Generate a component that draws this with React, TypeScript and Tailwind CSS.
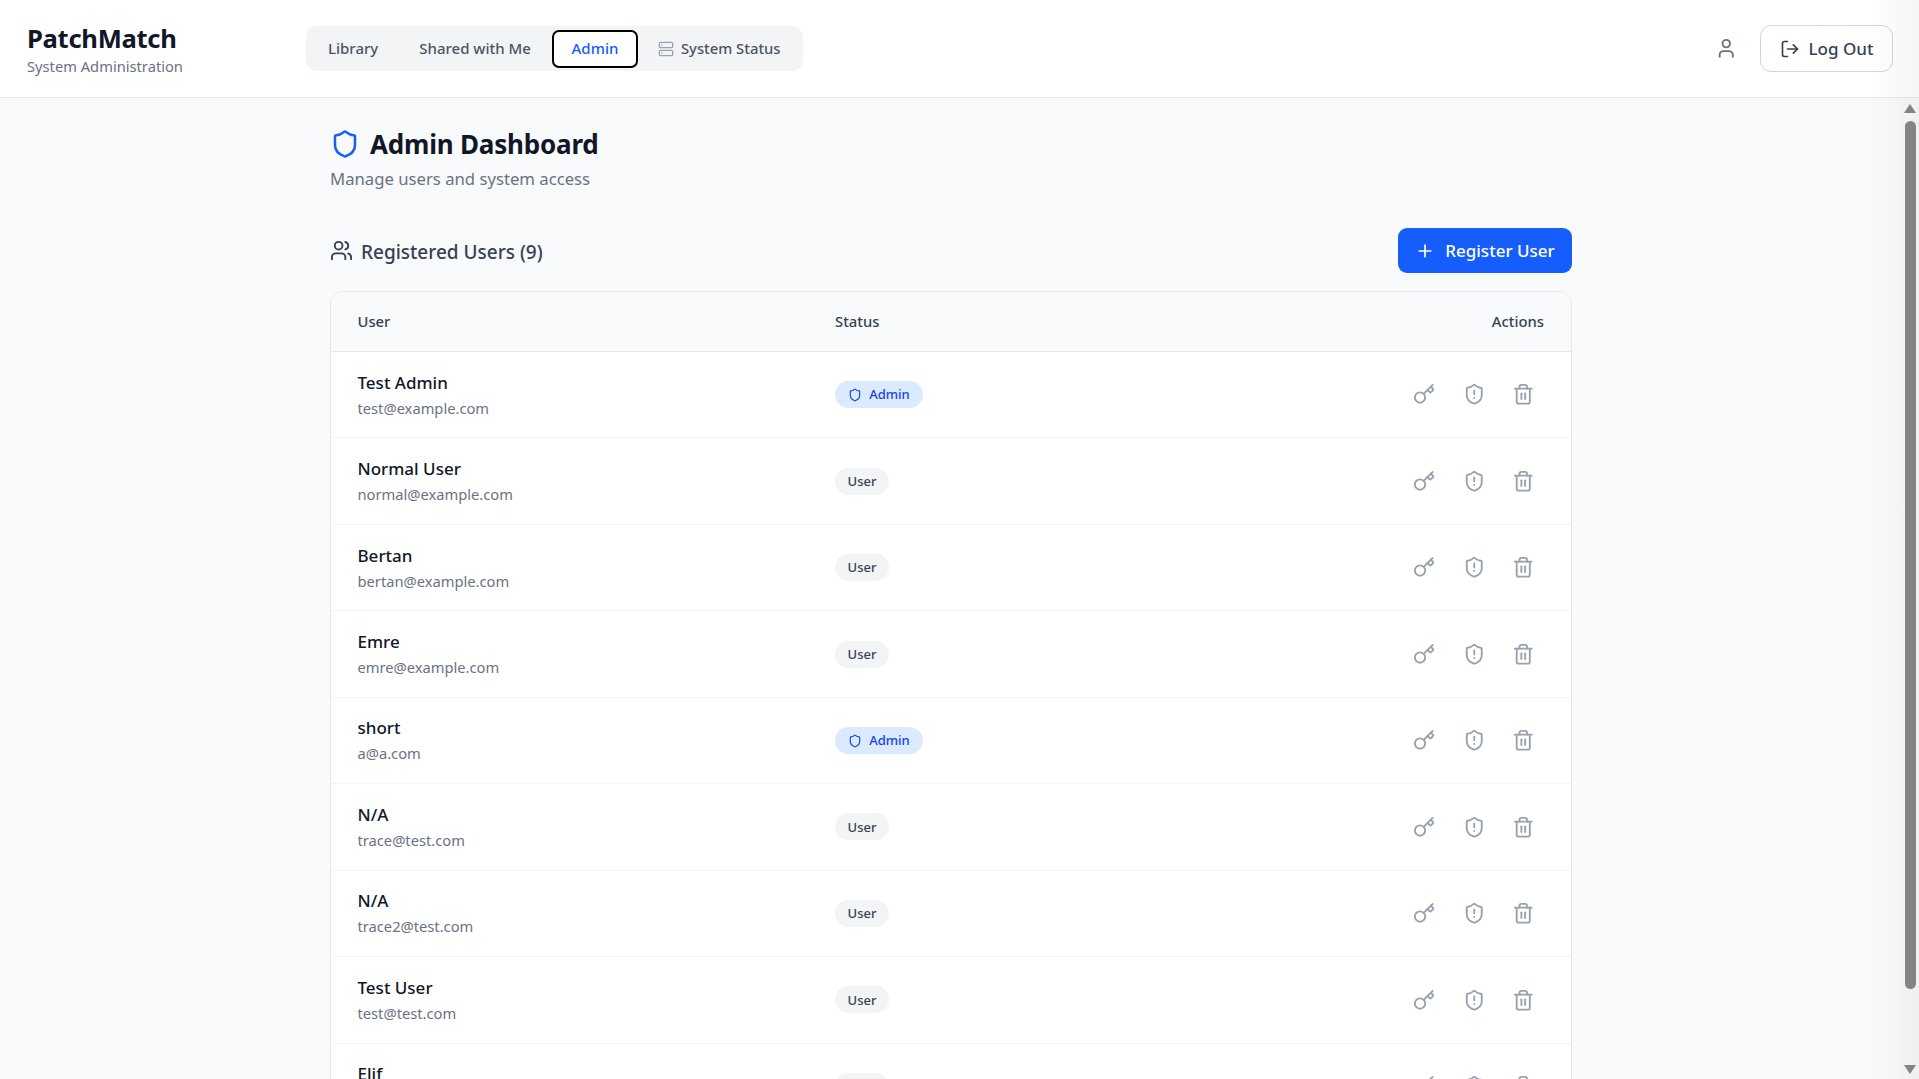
import { Key, LogOut, Plus, Server, Shield, ShieldAlert, Trash2, User, Users } from "lucide-react";

const users = [
  { name: "Test Admin", email: "test@example.com", admin: true },
  { name: "Normal User", email: "normal@example.com", admin: false },
  { name: "Bertan", email: "bertan@example.com", admin: false },
  { name: "Emre", email: "emre@example.com", admin: false },
  { name: "short", email: "a@a.com", admin: true },
  { name: "N/A", email: "trace@test.com", admin: false },
  { name: "N/A", email: "trace2@test.com", admin: false },
  { name: "Test User", email: "test@test.com", admin: false },
  { name: "Elif", email: "elif@example.com", admin: false },
];

const App = () => {
  return (
    <div className="relative flex h-[1079px] flex-col overflow-hidden bg-[#f9fafb] font-['Noto_Sans',sans-serif] text-[#101828]">
      <header className="flex h-[98px] shrink-0 items-center justify-between border-b border-[#e5e7eb] bg-white pl-[27px] pr-[26px]">
        <div className="flex items-center">
          <div className="w-[279px]">
            <h1 className="text-[25.6px] font-bold leading-[34px] tracking-[-0.3px]">PatchMatch</h1>
            <p className="text-[14.7px] leading-[20px] text-[#6a7282]">System Administration</p>
          </div>
          <nav className="flex h-[45px] items-center rounded-[11px] bg-[#f3f4f6] px-[2px] text-[15px] font-medium text-[#4a5565]">
            <button className="pl-[20px] pr-[21px]">Library</button>
            <button className="pl-[20px] pr-[21px]">Shared with Me</button>
            <button className="flex h-[38px] w-[86px] items-center justify-center rounded-[7px] border-2 border-black bg-white text-[#155dfc]">
              Admin
            </button>
            <button className="flex items-center gap-[7px] px-[20px] text-[14.8px]">
              <Server className="size-[16px] text-[#99a1af]" />
              System Status
            </button>
          </nav>
        </div>
        <div className="flex items-center gap-[23px]">
          <User className="size-[22.5px] text-[#6a7282]" />
          <button className="flex h-[47px] w-[133px] items-center justify-center gap-[9px] rounded-[11px] border border-[#d1d5dc] bg-white text-[17px] font-medium text-[#364153]">
            <LogOut className="size-[20px]" />
            Log Out
          </button>
        </div>
      </header>

      <main className="ml-[330px] w-[1242px] pt-[26px]">
        <div className="flex items-center gap-[10px]">
          <Shield className="size-[30px] text-[#155dfc]" />
          <h2 className="text-[26px] font-bold leading-[40px] tracking-[-0.2px]">Admin Dashboard</h2>
        </div>
        <p className="mt-[3px] text-[16.7px] leading-[24px] text-[#6a7282]">Manage users and system access</p>

        <div className="mt-[37px] flex h-[45px] items-center justify-between">
          <div className="flex items-center gap-[8px] text-[#364153]">
            <Users className="size-[23px]" />
            <span className="pt-[3px] text-[19px] font-medium">Registered Users (9)</span>
          </div>
          <button className="flex h-[45px] w-[174px] items-center justify-center gap-[10px] rounded-[9px] bg-[#155dfc] text-[17px] font-medium text-white">
            <Plus className="size-[20px]" />
            Register User
          </button>
        </div>

        <div className="mt-[18px] overflow-hidden rounded-[13px] border border-[#e5e7eb] bg-white">
          <div className="flex h-[60px] items-center justify-between border-b border-[#e5e7eb] bg-[#f9fafb] pl-[26.5px] pr-[27px] text-[14.8px] font-medium text-[#364153]">
            <div className="flex items-center">
              <span className="w-[477.5px]">User</span>
              <span>Status</span>
            </div>
            <span>Actions</span>
          </div>
          {users.map((u, i) => (
            <div key={i} className="flex h-[86.45px] items-center justify-between border-b border-[#f3f4f6] pl-[26.5px] pr-[28px]">
              <div className="flex items-center">
                <div className="w-[477.5px]">
                  <div className="text-[17px] font-medium leading-[26px]">{u.name}</div>
                  <div className="text-[14.7px] leading-[24px] text-[#6a7282]">{u.email}</div>
                </div>
                {u.admin ? (
                  <span className="flex h-[27px] w-[88px] items-center justify-center gap-[7px] rounded-full bg-[#dbeafe] pt-px text-[13px] font-medium text-[#1447e6]">
                    <Shield className="size-[14px]" />
                    Admin
                  </span>
                ) : (
                  <span className="flex h-[27px] w-[54px] items-center justify-center rounded-full bg-[#f3f4f6] pt-px text-[13px] font-medium text-[#364153]">
                    User
                  </span>
                )}
              </div>
              <div className="flex items-center gap-[9px] text-[#99a1af]">
                <span className="p-[9px]"><Key className="size-[22.5px]" /></span>
                <span className="py-[9px] pl-[10px] pr-[8px]"><ShieldAlert className="size-[22.5px]" /></span>
                <span className="p-[9px]"><Trash2 className="size-[22.5px]" /></span>
              </div>
            </div>
          ))}
        </div>
      </main>

      {/* scrollbar sits over the page, the content behind it is clipped */}
      <div className="pointer-events-none absolute inset-y-0 right-0 w-[50px] bg-gradient-to-r from-transparent to-black/[0.04]" />
      <div className="absolute bottom-0 right-0 top-[98px] w-[17px]">
        <div className="absolute left-[2px] top-[6px] h-0 w-0 border-x-[6.5px] border-b-[9px] border-x-transparent border-b-[#848484]" />
        <div className="absolute left-[3px] top-[23px] h-[868px] w-[11px] rounded-full bg-[#848484]" />
        <div className="absolute bottom-[5px] left-[2px] h-0 w-0 border-x-[6.5px] border-t-[9px] border-x-transparent border-t-[#848484]" />
      </div>
    </div>
  );
};

export default App;
